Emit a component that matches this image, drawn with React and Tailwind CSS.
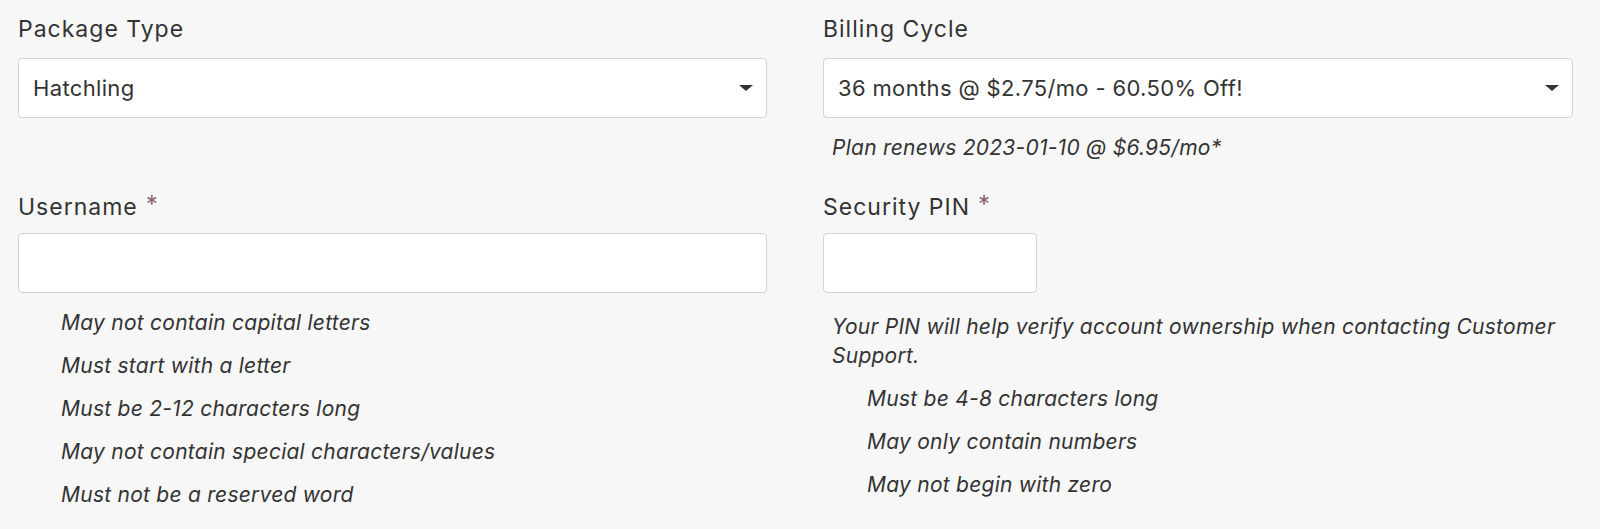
import React from "react";

const font = { fontFamily: "Inter, 'Open Sans', sans-serif" };

function Caret() {
  return (
    <svg width="14" height="6" viewBox="0 0 14 6" className="shrink-0">
      <path d="M0 0h14L7 6z" fill="#333" />
    </svg>
  );
}

function Select({ value }) {
  return (
    <div className="flex h-[60px] w-full items-center justify-between rounded-[4px] border border-[#d2d2d2] bg-white pl-[14px] pr-[13px]">
      <span className="text-[22px] tracking-[0.35px] text-[#333]">{value}</span>
      <Caret />
    </div>
  );
}

function Label({ children, required }) {
  return (
    <div className="flex h-[32px] items-center text-[23px] tracking-[1px] text-[#333]">
      {children}
      {required && <span className="ml-[8px] -mt-[4px] text-[24px] text-[#866368]">*</span>}
    </div>
  );
}

const userRules = [
  "May not contain capital letters",
  "Must start with a letter",
  "Must be 2-12 characters long",
  "May not contain special characters/values",
  "Must not be a reserved word",
];

const pinRules = ["Must be 4-8 characters long", "May only contain numbers", "May not begin with zero"];

const hint = "text-[21px] italic tracking-[0.25px] text-[#333]";

export default function App() {
  return (
    <div className="h-[529px] w-[1600px] overflow-hidden bg-[#f7f7f7] pl-[18px]" style={font}>
      <div className="grid grid-cols-[749px_750px] gap-x-[56px] pt-[13px]">
        <div>
          <Label>Package Type</Label>
          <div className="mt-[13px]">
            <Select value="Hatchling" />
          </div>
        </div>
        <div>
          <Label>Billing Cycle</Label>
          <div className="mt-[13px]">
            <Select value="36 months @ $2.75/mo - 60.50% Off!" />
          </div>
          <p className={`mt-[15px] pl-[9px] leading-[29px] ${hint}`}>
            Plan renews 2023-01-10 @ $6.95/mo*
          </p>
        </div>

        <div className="mt-[29px]">
          <Label required>Username</Label>
          <input className="mt-[10px] block h-[60px] w-full rounded-[4px] border border-[#d2d2d2] bg-white outline-none" />
          <ul className="mt-[8px] pl-[43px]">
            {userRules.map((r) => (
              <li key={r} className={`leading-[43px] ${hint}`}>{r}</li>
            ))}
          </ul>
        </div>
        <div className="mt-[29px]">
          <Label required>Security PIN</Label>
          <input className="mt-[10px] block h-[60px] w-[214px] rounded-[4px] border border-[#d2d2d2] bg-white outline-none" />
          <p className={`mt-[19px] pl-[9px] leading-[29px] tracking-[0.4px] ${hint}`}>
            Your PIN will help verify account ownership when contacting Customer
            <br />
            Support.
          </p>
          <ul className="mt-[7px] pl-[44px]">
            {pinRules.map((r) => (
              <li key={r} className={`leading-[43px] ${hint}`}>{r}</li>
            ))}
          </ul>
        </div>
      </div>
    </div>
  );
}
